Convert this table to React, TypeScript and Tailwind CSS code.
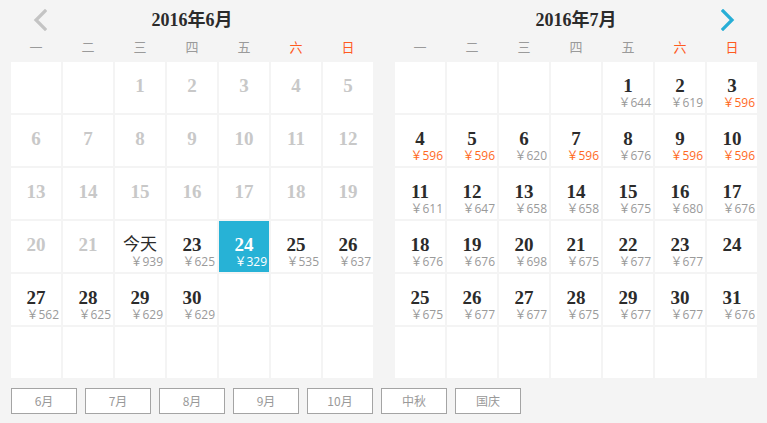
import React from "react";

type Day = { d?: number; label?: string; price?: number; hot?: boolean; past?: boolean; selected?: boolean };

const weekdays = ["一", "二", "三", "四", "五", "六", "日"];

const serif = { fontFamily: "'Liberation Serif', 'Noto Sans CJK SC', serif" };
const sans = { fontFamily: "'Noto Sans CJK SC', 'Noto Sans', sans-serif" };
const priceFont = { fontFamily: "'Open Sans', 'Noto Sans CJK SC', sans-serif" };

function blanks(n: number): Day[] {
  return Array(n).fill(0).map(() => ({}));
}

const juneData: [number, number][] = [
  [23, 625], [24, 329], [25, 535], [26, 637], [27, 562], [28, 625], [29, 629], [30, 629],
];

const june: Day[] = [
  ...blanks(2),
  ...Array.from({ length: 21 }, (_, i) => ({ d: i + 1, past: true })),
  { d: 22, label: "今天", price: 939 },
  ...juneData.map(([d, p]) => ({ d, price: p, selected: d === 24 })),
];
while (june.length < 42) june.push({});

const julyPrices = [
  644, 619, 596, 596, 596, 620, 596, 676, 596, 596, 611, 647, 658, 658, 675, 680, 676,
  676, 676, 698, 675, 677, 677, 0, 675, 677, 677, 675, 677, 677, 676,
];

const july: Day[] = [
  ...blanks(4),
  ...julyPrices.map((p, i) => ({ d: i + 1, price: p || undefined, hot: p === 596 })),
];
while (july.length < 42) july.push({});

function Cell({ day }: { day: Day }) {
  const bg = day.selected ? "bg-[#27b2d6]" : "bg-white";
  const numColor = day.selected ? "text-white" : day.past ? "text-[#c8c8c8]" : "text-[#2b2b2b]";
  const priceColor = day.selected ? "text-white" : day.hot ? "text-[#ff6a1f]" : "text-[#9a9a9a]";
  return (
    <div className={`h-[51px] ${bg} flex flex-col`}>
      {day.d !== undefined && (
        <>
          {day.label ? (
            <div className={`mt-[13px] h-[22px] leading-[22px] text-center text-[17px] ${numColor}`} style={serif}>
              {day.label}
            </div>
          ) : (
            <div className={`mt-[13px] h-[22px] leading-[22px] text-center text-[19px] font-bold ${numColor}`} style={serif}>
              {day.d}
            </div>
          )}
          {day.price !== undefined && (
            <div className={`h-[12px] leading-[12px] text-right pr-[2px] text-[12px] ${priceColor}`} style={priceFont}>
              ￥{day.price}
            </div>
          )}
        </>
      )}
    </div>
  );
}

function Chevron({ dir, color }: { dir: "left" | "right"; color: string }) {
  return (
    <svg width="14" height="22" viewBox="0 0 14 22" fill="none">
      <path
        d={dir === "left" ? "M12 2 L3 11 L12 20" : "M2 2 L11 11 L2 20"}
        stroke={color}
        strokeWidth="3.2"
        strokeLinecap="square"
      />
    </svg>
  );
}

function Month({ title, days, nav }: { title: string; days: Day[]; nav: "left" | "right" }) {
  return (
    <div className="w-[362px] relative">
      {nav === "left" ? (
        <div className="absolute left-[22px] top-[9px]">
          <Chevron dir="left" color="#c4c4c4" />
        </div>
      ) : (
        <div className="absolute right-[22px] top-[9px]">
          <Chevron dir="right" color="#27aed6" />
        </div>
      )}
      <div className="h-[40px] flex items-center justify-center text-[18px] font-bold text-[#2b2b2b]" style={serif}>
        {title}
      </div>
      <div className="grid grid-cols-[repeat(7,50px)] gap-x-[2px] h-[22px] text-[13px] leading-[14px]" style={sans}>
        {weekdays.map((w, i) => (
          <div key={w} className={`text-center ${i >= 5 ? "text-[#ff5a1f]" : "text-[#9a9a9a]"}`}>
            {w}
          </div>
        ))}
      </div>
      <div className="grid grid-cols-[repeat(7,50px)] gap-x-[2px] gap-y-[2px]">
        {days.map((day, i) => (
          <Cell key={i} day={day} />
        ))}
      </div>
    </div>
  );
}

const buttons = ["6月", "7月", "8月", "9月", "10月", "中秋", "国庆"];

export default function App() {
  return (
    <div className="w-[767px] h-[423px] bg-[#f4f4f4] pl-[11px] overflow-hidden">
      <div className="flex gap-[22px]">
        <Month title="2016年6月" days={june} nav="left" />
        <Month title="2016年7月" days={july} nav="right" />
      </div>
      <div className="flex gap-[8px] mt-[10px]">
        {buttons.map((b) => (
          <div
            key={b}
            className="w-[66px] h-[26px] bg-white border border-[#a4a4a4] flex items-center justify-center text-[12px] text-[#999]"
            style={sans}
          >
            {b}
          </div>
        ))}
      </div>
    </div>
  );
}
